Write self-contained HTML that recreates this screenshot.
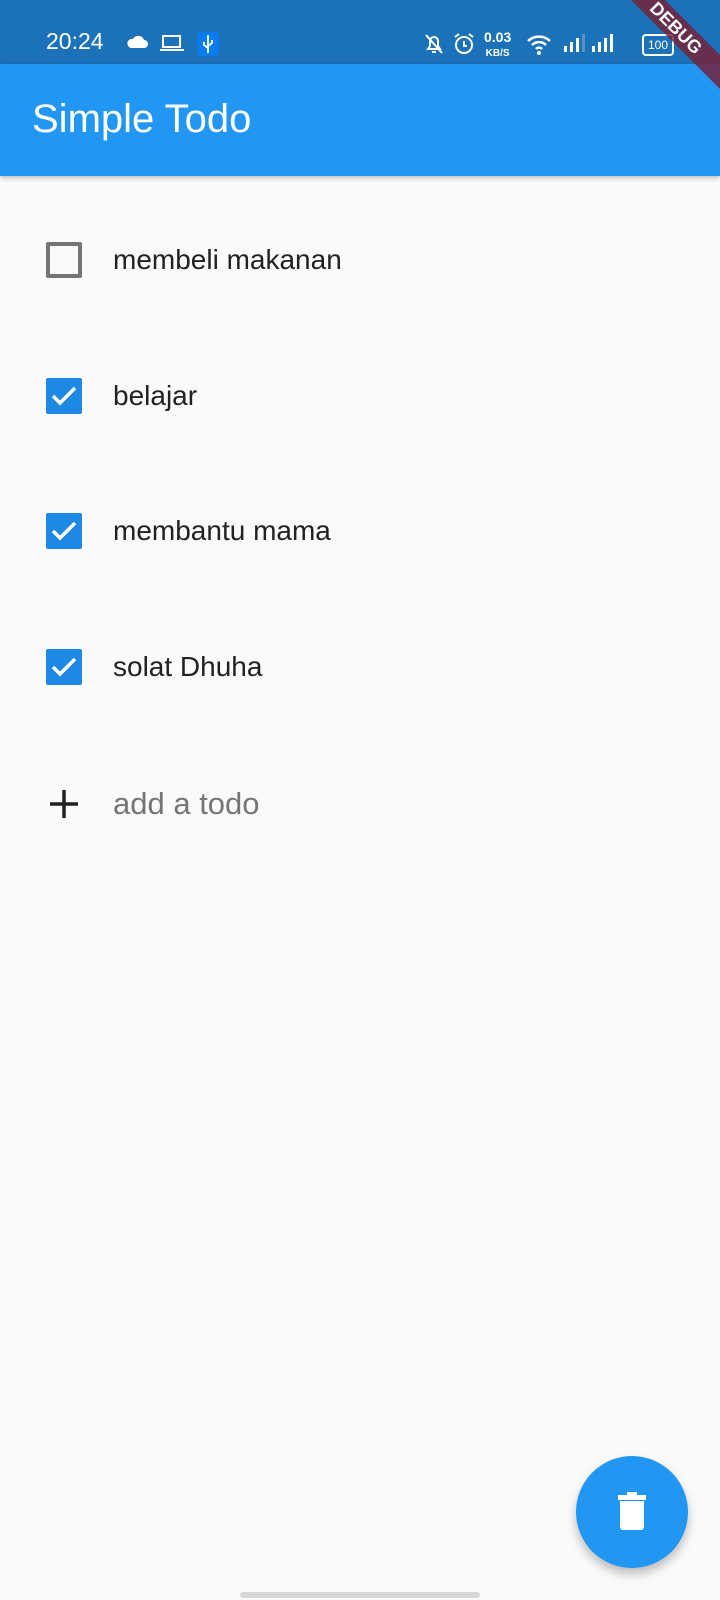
<!DOCTYPE html>
<html><head><meta charset="utf-8"><style>
body{margin:0;width:720px;height:1600px;background:#fafafa;font-family:"Liberation Sans",sans-serif;position:relative;overflow:hidden}
.sb{position:absolute;left:0;top:0;width:720px;height:64px;background:#1b72b9;color:#fff}
.ab{position:absolute;left:0;top:64px;width:720px;height:112px;background:#2196f3;box-shadow:0 2px 5px rgba(0,0,0,.25)}
.title{position:absolute;left:32px;top:33px;font-size:40px;color:#fff;line-height:44px}
.row{position:absolute;left:0;width:720px;height:40px}
.cb{position:absolute;left:46px;top:2px;width:36px;height:36px;box-sizing:border-box;border-radius:2px}
.un{border:4px solid #757575}
.ch{background:#1e88e5}
.lbl{position:absolute;left:113px;top:2px;font-size:28px;color:#212121;line-height:36px}
.fab{position:absolute;left:576px;top:1456px;width:112px;height:112px;border-radius:50%;background:#2196f3;box-shadow:0 6px 10px rgba(0,0,0,.25)}
.ribbon{position:absolute;right:-46px;top:16px;width:180px;height:24px;background:rgba(120,30,50,.8);color:#fff;font-weight:bold;font-size:18px;text-align:center;line-height:24px;transform:rotate(45deg)}
</style></head><body>
<div class="sb">
<div style="position:absolute;left:46px;top:28px;font-size:23px">20:24</div>
<svg style="position:absolute;left:126px;top:35px" width="22" height="14"><path d="M5 13h13a4 4 0 0 0 0-8 6 6 0 0 0-11-1 4.5 4.5 0 0 0-2 9z" fill="#fff"/></svg>
<svg style="position:absolute;left:160px;top:34px" width="24" height="18"><rect x="3" y="2" width="17" height="11" fill="none" stroke="#fff" stroke-width="2"/><rect x="0" y="15" width="24" height="2" fill="#fff"/></svg>
<div style="position:absolute;left:197px;top:32px;width:22px;height:24px;border-radius:4px;background:#0a7cf0"></div>
<svg style="position:absolute;left:200px;top:34px" width="16" height="20"><path d="M8 1v18M4 8v3l4 3M12 6v3l-4 3" stroke="#fff" stroke-width="1.8" fill="none"/></svg>
<svg style="position:absolute;left:424px;top:32px" width="20" height="24"><path d="M4 17h12l-2-3V9a4 4 0 0 0-8 0v5zM2 3l16 18M8 20h4" stroke="#fff" stroke-width="2" fill="none"/></svg>
<svg style="position:absolute;left:452px;top:32px" width="24" height="24"><circle cx="12" cy="13" r="8" stroke="#fff" stroke-width="2" fill="none"/><path d="M12 9v5h3M3 5l4-3M21 5l-4-3" stroke="#fff" stroke-width="2" fill="none"/></svg>
<div style="position:absolute;left:484px;top:30px;font-size:14px;font-weight:bold;line-height:14px;text-align:center">0.03<br><span style="font-size:10px">KB/S</span></div>
<svg style="position:absolute;left:526px;top:33px" width="26" height="22"><path d="M2 8a16 16 0 0 1 22 0M6 12a10 10 0 0 1 14 0M10 16a4 4 0 0 1 6 0" stroke="#fff" stroke-width="2.5" fill="none"/><circle cx="13" cy="20" r="2" fill="#fff"/></svg>
<svg style="position:absolute;left:564px;top:34px" width="64" height="20"><rect x="0" y="12" width="3" height="6" fill="#fff"/><rect x="6" y="8" width="3" height="10" fill="#fff"/><rect x="12" y="4" width="3" height="14" fill="#fff"/><rect x="18" y="0" width="3" height="18" fill="#5d8fc2"/><rect x="28" y="12" width="3" height="6" fill="#fff"/><rect x="34" y="8" width="3" height="10" fill="#fff"/><rect x="40" y="4" width="3" height="14" fill="#fff"/><rect x="46" y="0" width="3" height="18" fill="#fff"/></svg>
<div style="position:absolute;left:642px;top:34px;width:28px;height:18px;border:2px solid #fff;border-radius:4px;font-size:12px;line-height:18px;text-align:center">100</div>
</div>
<div class="ab"><div class="title">Simple Todo</div></div>
<div class="ribbon">DEBUG</div>

<div class="row" style="top:240px"><div class="cb un"></div><div class="lbl">membeli makanan</div></div>
<div class="row" style="top:376px"><div class="cb ch"><svg width="36" height="36"><path d="M7 18l7 7 15-15" stroke="#fff" stroke-width="3.5" fill="none"/></svg></div><div class="lbl">belajar</div></div>
<div class="row" style="top:511px"><div class="cb ch"><svg width="36" height="36"><path d="M7 18l7 7 15-15" stroke="#fff" stroke-width="3.5" fill="none"/></svg></div><div class="lbl">membantu mama</div></div>
<div class="row" style="top:647px"><div class="cb ch"><svg width="36" height="36"><path d="M7 18l7 7 15-15" stroke="#fff" stroke-width="3.5" fill="none"/></svg></div><div class="lbl">solat Dhuha</div></div>
<div class="row" style="top:784px"><svg style="position:absolute;left:48px;top:4px" width="32" height="32"><path d="M16 2v28M2 16h28" stroke="#212121" stroke-width="3.5"/></svg><div class="lbl" style="color:#757575;font-size:31px">add a todo</div></div>

<div class="fab"><svg style="position:absolute;left:42px;top:36px" width="28" height="38"><path d="M0 3h28v5H0zM9 0h10v4H9z" fill="#fff"/><path d="M2 9h24v26a3 3 0 0 1-3 3H5a3 3 0 0 1-3-3z" fill="#fff"/></svg></div>
<div style="position:absolute;left:240px;top:1592px;width:240px;height:6px;border-radius:3px;background:#d6d6d6"></div>
</body></html>
